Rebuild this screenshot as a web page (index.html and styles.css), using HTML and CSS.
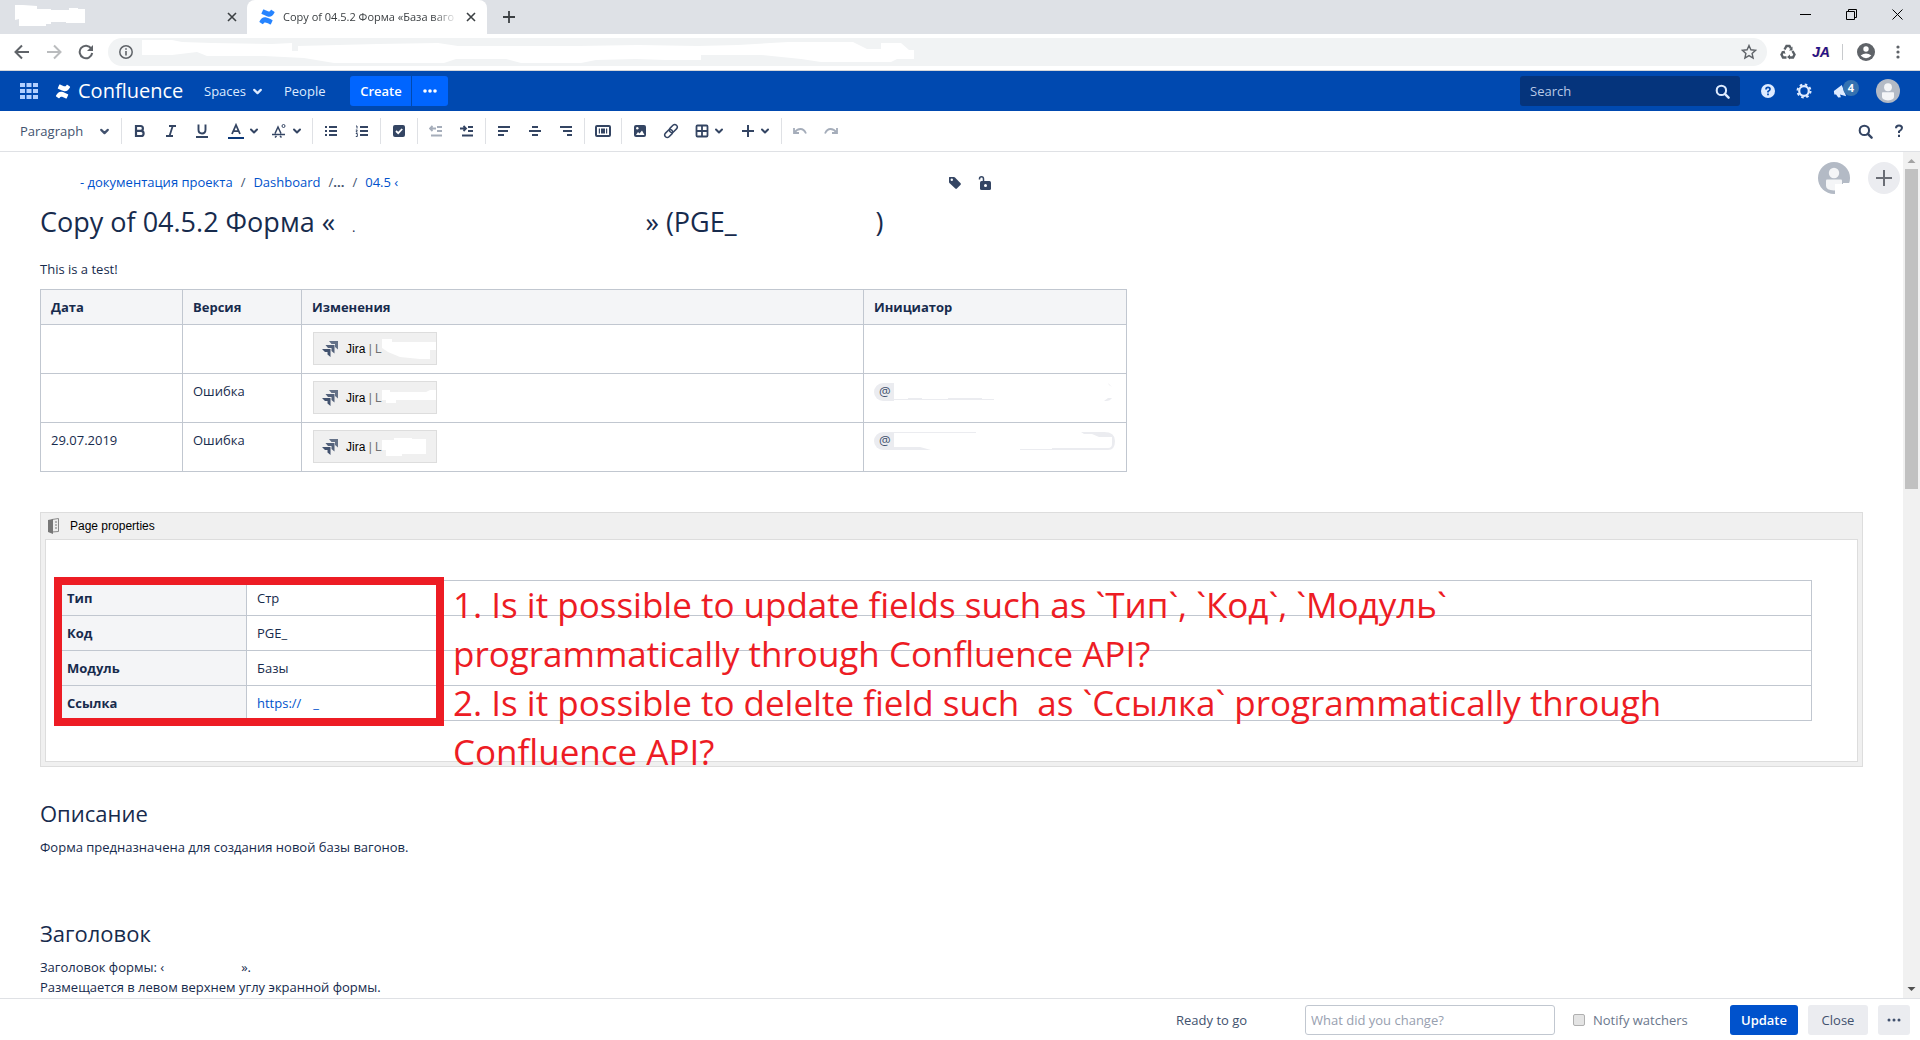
FILE: index.html
```html
<!DOCTYPE html>
<html lang="ru">
<head>
<meta charset="utf-8">
<title>Copy of 04.5.2 Форма</title>
<link rel="stylesheet" href="styles.css">
</head>
<body>
<svg class="defs" aria-hidden="true">
  <symbol id="chev" viewBox="0 0 10 10"><path d="M2 3.500l3 3 3-3" fill="none" stroke="currentColor" stroke-width="2" stroke-linecap="round" stroke-linejoin="round"/></symbol>
  <symbol id="glass" viewBox="0 0 16 16"><circle cx="6.800" cy="6.800" r="5" fill="none" stroke="currentColor" stroke-width="2.200"/><path d="M10.500 10.500l4 4" stroke="currentColor" stroke-width="2.600" stroke-linecap="round"/></symbol>
  <symbol id="conf" viewBox="0 0 16 16"><path d="M.6 12.200c1.600-2.700 3.100-4.200 6-3.900 2 .3 4.200 1.500 6.600 2.600.4.200.5.500.3.900l-1.500 3.300c-.2.400-.5.500-.9.300C6.900 13.400 5.700 12.700 4.300 14.800c-.3.400-.6.500-.9.300L.7 13.300c-.4-.3-.4-.7-.1-1.100z"/><path d="M15.400 3.800c-1.600 2.700-3.100 4.200-6 3.900-2-.3-4.200-1.500-6.600-2.600-.4-.2-.5-.5-.3-.9L4 .900c.2-.4.5-.5.900-.3 4.200 2 5.400 2.700 6.800.6.300-.4.600-.5.900-.3l2.700 1.800c.4.300.4.700.1 1.100z"/></symbol>
  <symbol id="jira" viewBox="0 0 16 16"><path d="M7 0H16v8.500l-3-2.500V3H9.500z" opacity=".8"/><path d="M3.500 4h9v8.500l-3-2.500V7H6z" opacity=".9"/><path d="M0 8h8.500v8l-3-2.500V11H3z"/></symbol>
  <symbol id="person" viewBox="0 0 32 32"><circle cx="16" cy="16" r="16" fill="#b3bac5"/><circle cx="16" cy="11" r="5.200" fill="#f4f5f7"/><path d="M8 18.500q0-1 1-1h14q1 0 1 1V24q0 4-8 4.500Q8 28 8 24z" fill="#f4f5f7"/></symbol>
</svg>

<header class="tabs">
  <div class="tab tab-idle">
    <svg class="blot" width="70" height="27" viewBox="0 0 70 27"><path d="M0 1h8l14 1v3h14v1h18V4h9v1h7v14H51v-1H36v2h-5v2H4v-7L0 16z" fill="#fff"/></svg>
    <button class="tab-x" aria-label="Close tab"><svg width="10" height="10" viewBox="0 0 10 10"><path d="M1 1l8 8M9 1L1 9" stroke="#3c4043" stroke-width="1.600"/></svg></button>
  </div>
  <div class="tab tab-on">
    <svg width="16" height="16" fill="#2684ff"><use href="#conf"/></svg>
    <span class="tab-title">Copy of 04.5.2 Форма «База ваго</span>
    <button class="tab-x" aria-label="Close tab"><svg width="10" height="10" viewBox="0 0 10 10"><path d="M1 1l8 8M9 1L1 9" stroke="#3c4043" stroke-width="1.600"/></svg></button>
  </div>
  <button class="tab-new" aria-label="New tab"><svg width="12" height="12" viewBox="0 0 12 12"><path d="M6 0v12M0 6h12" stroke="#3c4043" stroke-width="1.800"/></svg></button>
  <div class="window-buttons">
    <button aria-label="Minimize"><svg width="11" height="11"><path d="M0 5.500h11" stroke="#000"/></svg></button>
    <button aria-label="Restore"><svg width="11" height="11" fill="none" stroke="#000"><path d="M.5 2.500h8v8h-8zM2.500 2.500v-2h8v8h-2"/></svg></button>
    <button aria-label="Close window"><svg width="11" height="11"><path d="M.5.500l10 10M10.500.500l-10 10" stroke="#000"/></svg></button>
  </div>
</header>

<nav class="address" aria-label="Browser">
  <button class="nav-btn" aria-label="Back"><svg width="16" height="16" viewBox="0 0 16 16" fill="none" stroke="#5f6368" stroke-width="2"><path d="M15 8H2M8 1.500L1.500 8 8 14.500"/></svg></button>
  <button class="nav-btn" aria-label="Forward"><svg width="16" height="16" viewBox="0 0 16 16" fill="none" stroke="#babcbe" stroke-width="2"><path d="M1 8h13M8 1.500L14.500 8 8 14.500"/></svg></button>
  <button class="nav-btn" aria-label="Reload"><svg width="16" height="16" viewBox="0 0 16 16"><path d="M13.200 4.400A6.300 6.300 0 1 0 14.200 9" fill="none" stroke="#5f6368" stroke-width="2"/><path d="M15 1v6H9z" fill="#5f6368"/></svg></button>
  <div class="omnibox">
    <svg width="14" height="14" viewBox="0 0 14 14"><circle cx="7" cy="7" r="6.200" fill="none" stroke="#5f6368" stroke-width="1.500"/><path d="M7 6v4.500M7 3.200v1.600" stroke="#5f6368" stroke-width="1.600"/></svg>
    <svg class="url-blot" width="772" height="26" viewBox="0 0 772 26"><path d="M0 1h30l10 2 30 1 60 1 20-1v8h6V7l80-2 60-1 20 3h120l60-1 60 1 40-1 50-3h65l14 7h14V4h20l8 7h18v9h-30l-6 3h-70l-20-3-40-4h-60v5h-35l-30-1-40 1-15 3h-60l-15-4h-50l-12 4h-110l-30-5-60-3H165v1h-100l-10-4-25 3H0z" fill="#fff"/></svg>
    <svg class="star" width="16" height="16" viewBox="0 0 16 16"><path d="M8 1.500l1.900 4.300 4.700.5-3.500 3.100 1 4.600L8 11.600 3.900 14l1-4.600L1.400 6.300l4.700-.5z" fill="none" stroke="#5f6368" stroke-width="1.400"/></svg>
  </div>
  <div class="extensions">
    <button aria-label="Recycle"><svg width="16" height="16" viewBox="0 0 16 16" fill="none" stroke="#5a6066" stroke-width="2.400"><path d="M4.500 5.500l2-3.500h3l1.500 2.500M12.500 7l2 3.500-1.500 3H9M6.500 13.500H3l-1.500-3L3.300 7.500"/><path d="M12.500 2.500v4H9zM10 10.500v5l-3-2.500zM1 8l3.500-1.500L5.500 10z" fill="#5a6066" stroke="none"/></svg></button>
    <button class="ja">JA</button>
    <span class="bar"></span>
    <button aria-label="Profile"><svg width="18" height="18" viewBox="0 0 18 18"><circle cx="9" cy="9" r="9" fill="#5f6368"/><circle cx="9" cy="6" r="2.700" fill="#fff"/><path d="M3.600 12.600Q9 8.400 14.400 12.600 9 17.800 3.600 12.600z" fill="#fff"/></svg></button>
    <button aria-label="Menu"><svg width="4" height="16" viewBox="0 0 4 16" fill="#5f6368"><circle cx="2" cy="3" r="1.600"/><circle cx="2" cy="8" r="1.600"/><circle cx="2" cy="13" r="1.600"/></svg></button>
  </div>
</nav>

<header class="app-bar">
  <button class="apps" aria-label="Applications"><svg width="18" height="16" viewBox="0 0 18 16" fill="#b3d0ff"><path d="M0 0h5v4H0zM6.500 0h5v4h-5zM13 0h5v4h-5zM0 6h5v4H0zM6.500 6h5v4h-5zM13 6h5v4h-5zM0 12h5v4H0zM6.500 12h5v4h-5zM13 12h5v4h-5z"/></svg></button>
  <a class="brand" href="#"><svg width="16" height="15" fill="#fff"><use href="#conf"/></svg>Confluence</a>
  <a class="menu-link spaces" href="#">Spaces<svg width="11" height="11"><use href="#chev"/></svg></a>
  <a class="menu-link" href="#">People</a>
  <div class="create"><button class="create-main">Create</button><button class="create-more" aria-label="Create from template"><svg width="14" height="4" fill="#fff"><circle cx="2" cy="2" r="1.800"/><circle cx="7" cy="2" r="1.800"/><circle cx="12" cy="2" r="1.800"/></svg></button></div>
  <label class="search"><input type="text" placeholder="Search" aria-label="Search"><svg width="15" height="15"><use href="#glass"/></svg></label>
  <button class="bar-icon" aria-label="Help"><svg width="14" height="14" viewBox="0 0 14 14"><circle cx="7" cy="7" r="7" fill="#deebff"/><path d="M5 5.400Q5 3.400 7 3.400t2 1.900Q9 6.500 7 7.500v1M7 9.600v1.600" fill="none" stroke="#0049b0" stroke-width="1.700"/></svg></button>
  <button class="bar-icon" aria-label="Settings"><svg width="16" height="16" viewBox="0 0 16 16" fill="none" stroke="#deebff"><circle cx="8" cy="8" r="6.500" stroke-width="2" stroke-dasharray="2.550 2.550"/><circle cx="8" cy="8" r="4.800" stroke-width="2.200"/></svg></button>
  <button class="bar-icon bell" aria-label="Notifications"><svg width="14" height="14" viewBox="0 0 16 16" fill="#deebff"><path d="M1 8l9-7 5 13-7-2 1 3-3 .5L3.500 12 1.500 12z"/></svg><span class="badge">4</span></button>
  <a class="me" href="#" aria-label="Profile"><svg width="24" height="24"><use href="#person"/></svg></a>
</header>

<div class="toolbar" role="toolbar">
  <button class="style-pick">Paragraph<svg width="11" height="11"><use href="#chev"/></svg></button>
  <div class="group">
    <button class="tool" aria-label="Bold"><svg width="16" height="16" viewBox="0 0 16 16" fill="none" stroke="currentColor" stroke-width="2.200"><path d="M4 3h4.500a2.400 2.400 0 0 1 0 4.800H4h5a2.600 2.600 0 0 1 0 5.200H4zV13"/></svg></button>
    <button class="tool" aria-label="Italic"><svg width="16" height="16" viewBox="0 0 16 16" fill="none" stroke="currentColor" stroke-width="1.800"><path d="M6 3h7M3 13h7M9.700 3L6.500 13"/></svg></button>
    <button class="tool" aria-label="Underline"><svg width="16" height="16" viewBox="0 0 16 16" fill="none" stroke="currentColor" stroke-width="1.900"><path d="M4.500 1.500v5.300q0 3.700 3.500 3.700t3.500-3.700V1.500M2 14h12"/></svg></button>
    <button class="tool drop shifted" aria-label="Text colour"><svg width="16" height="16" viewBox="0 0 16 16" fill="none" stroke="currentColor" stroke-width="1.800"><path d="M4 11L8 2l4 9M5.500 8.200h5"/><path d="M0 15h16" stroke="#0c3878" stroke-width="2"/></svg><svg width="10" height="10"><use href="#chev"/></svg></button>
    <button class="tool drop" aria-label="More formatting"><svg width="16" height="16" viewBox="0 0 16 16" fill="none" stroke="currentColor" stroke-width="1.500"><path d="M4 10.500L7 4l3 6.500M1 11.500h13M4 14.500l1.500-1.500M9 13l1.500 1.500"/><circle cx="12.500" cy="3" r="1.500" stroke-width="1"/></svg><svg width="10" height="10"><use href="#chev"/></svg></button>
  </div>
  <div class="group">
    <button class="tool" aria-label="Bullet list"><svg width="14" height="14" viewBox="0 0 14 14" stroke="currentColor" stroke-width="2"><path d="M1 3h2M1 7h2M1 11h2M5 3h8M5 7h8M5 11h8"/></svg></button>
    <button class="tool" aria-label="Numbered list"><svg width="14" height="14" viewBox="0 0 14 14" fill="none" stroke="currentColor" stroke-width="2"><path d="M5 3h8M5 7h8M5 11h8"/><path d="M1 2h1v2.500M.8 6h1.500L1 8h1.500M.8 9.500h1.500v3H.8" stroke-width="1"/></svg></button>
  </div>
  <div class="group">
    <button class="tool" aria-label="Task list"><svg width="14" height="14" viewBox="0 0 14 14"><rect x="1" y="1" width="12" height="12" rx="2" fill="currentColor"/><path d="M4 7l2.200 2.200L10.200 5" fill="none" stroke="#fff" stroke-width="1.800"/></svg></button>
  </div>
  <div class="group">
    <button class="tool off" aria-label="Outdent"><svg width="14" height="14" viewBox="0 0 14 14" fill="none" stroke="currentColor" stroke-width="1.800"><path d="M8 3h5M8 7h5M2 11.500h11M7 4.500H1M3.500 2L1 4.500 3.500 7"/></svg></button>
    <button class="tool" aria-label="Indent"><svg width="14" height="14" viewBox="0 0 14 14" fill="none" stroke="currentColor" stroke-width="1.800"><path d="M8 3h5M8 7h5M2 11.500h11M0 4.500h6M3.500 2L6 4.500 3.500 7"/></svg></button>
  </div>
  <div class="group">
    <button class="tool" aria-label="Align left"><svg width="14" height="14" viewBox="0 0 14 14" stroke="currentColor" stroke-width="2"><path d="M1 3h12M1 7h10M1 11h6"/></svg></button>
    <button class="tool" aria-label="Align centre"><svg width="14" height="14" viewBox="0 0 14 14" stroke="currentColor" stroke-width="2"><path d="M4 3h6M1 7h12M4 11h6"/></svg></button>
    <button class="tool" aria-label="Align right"><svg width="14" height="14" viewBox="0 0 14 14" stroke="currentColor" stroke-width="2"><path d="M1 3h12M4 7h9M8 11h5"/></svg></button>
  </div>
  <div class="group">
    <button class="tool" aria-label="Page layout"><svg width="16" height="14" viewBox="0 0 16 14"><rect x="1" y="2" width="14" height="10" rx="1" fill="none" stroke="currentColor" stroke-width="2"/><path d="M3.800 4.500h1.200v5H3.800zM6 4.500h4v5H6zM11 4.500h1.200v5H11z" fill="currentColor"/></svg></button>
  </div>
  <div class="group">
    <button class="tool" aria-label="Image"><svg width="14" height="14" viewBox="0 0 14 14"><rect x="1" y="1" width="12" height="12" rx="2" fill="currentColor"/><circle cx="4.300" cy="4.300" r="1.200" fill="#fff"/><path d="M3 11l2-3 1.500 1.500L9 6.500l2.500 4.500z" fill="#fff"/></svg></button>
    <button class="tool" aria-label="Link"><svg width="16" height="16" viewBox="0 0 16 16" fill="none" stroke="currentColor" stroke-width="1.500"><rect x="5.800" y="3" width="9" height="5" rx="2.500" transform="rotate(-45 10.300 5.500)"/><rect x="1.200" y="8" width="9" height="5" rx="2.500" transform="rotate(-45 5.700 10.500)"/></svg></button>
    <button class="tool drop" aria-label="Table"><svg width="14" height="14" viewBox="0 0 14 14" fill="none" stroke="currentColor" stroke-width="1.800"><rect x="1.500" y="1.500" width="11" height="11" rx="1"/><path d="M7 1.500v11M1.500 7h11"/></svg><svg width="10" height="10"><use href="#chev"/></svg></button>
    <button class="tool drop" aria-label="Insert"><svg width="14" height="14" viewBox="0 0 14 14" stroke="currentColor" stroke-width="2"><path d="M7 1v12M1 7h12"/></svg><svg width="10" height="10"><use href="#chev"/></svg></button>
  </div>
  <div class="group">
    <button class="tool off" aria-label="Undo"><svg width="14" height="14" viewBox="0 0 14 14" fill="none" stroke="currentColor" stroke-width="1.800"><path d="M1 4v5h5M1.500 8.500Q4 5 7.500 5T13 9.500"/></svg></button>
    <button class="tool off" aria-label="Redo"><svg width="14" height="14" viewBox="0 0 14 14" fill="none" stroke="currentColor" stroke-width="1.800"><path d="M13 4v5H8M12.500 8.500Q10 5 6.500 5T1 9.500"/></svg></button>
  </div>
  <div class="toolbar-end">
    <button class="tool" aria-label="Find"><svg width="15" height="15"><use href="#glass"/></svg></button>
    <button class="tool" aria-label="Editor help"><svg width="12" height="14" viewBox="0 0 12 14"><path d="M3 4.200Q3 1.500 6 1.500t3 2.500Q9 5.500 6 7.500V9M6 10.800V13" fill="none" stroke="currentColor" stroke-width="2"/></svg></button>
  </div>
</div>

<div class="stage">
  <main class="page">
    <div class="top-line">
      <nav class="crumbs" aria-label="Breadcrumbs">
        <a href="#">- документация проекта</a><span>/</span><a href="#">Dashboard</a><span>/<b>...</b></span><span>/</span><a href="#">04.5 ‹</a>
      </nav>
      <div class="page-tools">
        <button aria-label="Labels"><svg width="14" height="14" viewBox="0 0 14 14"><path d="M1 1.500Q1 1 1.500 1H6q.6 0 1 .4l5.600 5.800q.7.800 0 1.600l-3.700 3.800q-.8.700-1.600 0L1.400 7Q1 6.600 1 6z" fill="#344563"/><circle cx="3.800" cy="3.800" r="1.200" fill="#fff"/></svg></button>
        <button aria-label="Restrictions"><svg width="14" height="14" viewBox="0 0 14 14"><path d="M1.500 3.500V2.800Q1.500.800 3.500.800T5.500 3v3" fill="none" stroke="#344563" stroke-width="1.500"/><rect x="2" y="5" width="11" height="9" rx="1.500" fill="#344563"/><circle cx="7.500" cy="9.500" r="1.500" fill="#fff"/></svg></button>
      </div>
      <div class="people">
        <svg width="32" height="32"><use href="#person"/><path d="M17 22h8v-1h7v11H17z" fill="#fff"/></svg>
        <button class="invite" aria-label="Invite"><svg width="16" height="16" viewBox="0 0 16 16"><path d="M8 0v16M0 8h16" stroke="#6b6e76" stroke-width="2"/></svg></button>
      </div>
    </div>

    <h1 class="title"><span>Copy of 04.5.2 Форма «</span><span class="gap-s"></span><small>.</small><span class="gap-l"></span><span>» (PGE_</span><span class="gap-m"></span><span>)</span></h1>

    <p class="lead">This is a test!</p>

    <table class="history">
      <thead><tr><th class="c-date">Дата</th><th class="c-ver">Версия</th><th class="c-chg">Изменения</th><th>Инициатор</th></tr></thead>
      <tbody>
        <tr><td></td><td></td><td><div class="macro"><svg width="16" height="16" fill="#42526e"><use href="#jira"/></svg>Jira <i>| L</i><svg class="smear" width="54" height="20" viewBox="0 0 54 20"><path d="M0 0h10v3h44v8h-6v9H38l-20-2-12-5-6-4z" fill="#fff"/></svg></div></td><td></td></tr>
        <tr><td></td><td>Ошибка</td><td><div class="macro"><svg width="16" height="16" fill="#42526e"><use href="#jira"/></svg>Jira <i>| L</i><svg class="smear" width="54" height="20" viewBox="0 0 54 20"><path d="M0 2h8v2h36l4-2h6v10H14v3H4v-3H0z" fill="#fff"/></svg></div></td>
          <td><div class="mention"><span>@</span><svg width="218" height="18" viewBox="0 0 218 18" fill="#ebecf0"><path d="M0 17h100v-1H88v-1H54v1H28v-1H14v1H0zM210 18l4-3h4q-2 3-6 3zM214 0l4 4-3-2z"/></svg></div></td></tr>
        <tr><td>29.07.2019</td><td>Ошибка</td><td><div class="macro"><svg width="16" height="16" fill="#42526e"><use href="#jira"/></svg>Jira <i>| L</i><svg class="smear" width="54" height="20" viewBox="0 0 54 20"><path d="M0 3h12V1h18v1h14v15H20v2H4v-6H0z" fill="#fff"/></svg></div></td>
          <td><div class="mention"><span>@</span><svg width="221" height="18" viewBox="0 0 221 18" fill="#ebecf0"><path d="M0 0h82v1H0zM0 15h26l11 3H0zM126 17h32v-1h56q4 0 4-4V5h-13l-7-3h-8l-3-2h23q11 0 11 9t-7 9h-88z"/></svg></div></td></tr>
      </tbody>
    </table>

    <section class="macro-box">
      <div class="macro-head"><svg width="12" height="16" viewBox="0 0 12 16"><path d="M4 1.500l6.500-1v13l-6.500.5z" fill="#eee" stroke="#8a8a8a"/><path d="M0 2l5-1v15l-5-2z" fill="#777"/><path d="M7 4h2M7 7h2M7 10h2" stroke="#777"/></svg>Page properties</div>
      <div class="macro-body">
        <table class="props">
          <tr><th>Тип</th><td>Стр</td></tr>
          <tr><th>Код</th><td>PGE_</td></tr>
          <tr><th>Модуль</th><td>Базы</td></tr>
          <tr><th>Ссылка</th><td><a href="#">https://<span class="gap-link"></span>_</a></td></tr>
        </table>
        <div class="marker"></div>
        <div class="note">
          <p>1. Is it possible to update fields such as `Тип`, `Код`, `Модуль`<br>programmatically through Confluence API?</p>
          <p>2. Is it possible to delelte field such&nbsp; as `Ссылка` programmatically through<br>Confluence API?</p>
        </div>
      </div>
    </section>

    <h2>Описание</h2>
    <p>Форма предназначена для создания новой базы вагонов.</p>
    <h2 class="next">Заголовок</h2>
    <p>Заголовок формы: ‹<span class="gap-p"></span>».<br>Размещается в левом верхнем углу экранной формы.</p>
  </main>
  <div class="scrollbar" aria-hidden="true">
    <svg width="17" height="17"><path d="M4.500 11h8l-4-4z" fill="#a3a3a3"/></svg>
    <div class="thumb"></div>
    <svg width="17" height="17"><path d="M4.500 6h8l-4 4z" fill="#505050"/></svg>
  </div>
</div>

<footer class="save-bar">
  <span class="status">Ready to go</span>
  <input class="comment" type="text" placeholder="What did you change?" aria-label="What did you change?">
  <label class="notify"><input type="checkbox">Notify watchers</label>
  <button class="btn primary">Update</button>
  <button class="btn">Close</button>
  <button class="btn more" aria-label="More"><svg width="14" height="4" fill="#42526e"><circle cx="2" cy="2" r="1.500"/><circle cx="7" cy="2" r="1.500"/><circle cx="12" cy="2" r="1.500"/></svg></button>
</footer>
</body>
</html>
```
FILE: styles.css
```css
* { box-sizing: border-box; }
body {
  margin: 0;
  height: 100vh;
  display: flex;
  flex-direction: column;
  overflow: hidden;
  font: 13px/20px "Open Sans", "Noto Sans", sans-serif;
  color: #172b4d;
  background: #fff;
}
button, input { font: inherit; color: inherit; }
button { border: 0; padding: 0; background: none; display: flex; align-items: center; justify-content: center; }
a { color: #0052cc; text-decoration: none; }
svg { flex: none; display: block; }
.defs { position: absolute; width: 0; height: 0; }

/* Browser tabs */
.tabs { flex: none; display: flex; height: 34px; background: #dee1e6; }
.tab { display: flex; align-items: center; }
.tab-idle { width: 247px; justify-content: space-between; padding: 0 10px 0 15px; }
.tab-on { width: 240px; padding: 0 11px 0 12px; background: #fff; border-radius: 8px 8px 0 0; gap: 8px; font-size: 11px; color: #3c4043; }
.tab-title { flex: 1; overflow: hidden; white-space: nowrap; mask-image: linear-gradient(90deg, #000 85%, transparent); }
.tab-new { width: 44px; }
.window-buttons { margin-left: auto; display: flex; height: 28px; }
.window-buttons button { width: 46px; }

/* Address bar */
.address { flex: none; display: flex; align-items: center; height: 37px; padding: 0 16px 0 6px; border-bottom: 1px solid #d4d6da; }
.nav-btn { width: 32px; }
.omnibox { flex: 1; display: flex; align-items: center; gap: 9px; height: 28px; margin-left: 6px; padding: 0 10px 0 11px; border-radius: 14px; background: #f1f3f4; }
.star { margin-left: auto; }
.extensions { display: flex; align-items: center; gap: 14px; padding: 0 4px 0 13px; }
.ja { width: 22px; margin-right: -4px; font: italic bold 14px/16px "Liberation Sans", sans-serif; color: #22118f; text-shadow: 1px 0 #ffd9a0; }
.bar { width: 1px; height: 16px; background: #c8cacd; }
.extensions > :last-child { margin-left: 7px; }

/* Application header */
.app-bar { flex: none; display: flex; align-items: center; height: 40px; padding: 0 20px; background: #0049b0; color: #deebff; }
.apps { width: 18px; margin-right: 17px; }
.brand { display: flex; align-items: center; gap: 7px; width: 149px; color: #fff; font-size: 20px; }
.menu-link { color: #deebff; }
.spaces { display: flex; align-items: center; gap: 6px; width: 80px; }
.create { display: flex; gap: 1px; margin-left: 25px; height: 30px; font-weight: 600; color: #fff; }
.create button { background: #0065ff; }
.create-main { width: 61px; border-radius: 3px 0 0 3px; }
.create-more { width: 36px; border-radius: 0 3px 3px 0; }
.search { display: flex; align-items: center; width: 220px; height: 30px; margin-left: auto; margin-right: 10px; padding: 0 10px; border-radius: 3px; background: #05347c; }
.search input { flex: 1; min-width: 0; padding: 0; border: 0; background: none; }
.search input::placeholder { color: #b8c9e6; opacity: 1; }
.bar-icon { width: 36px; position: relative; }
.badge { position: absolute; left: 21px; top: -4px; width: 16px; height: 16px; border-radius: 8px; background: #3572b0; color: #fff; font: bold 11px/16px "Open Sans", sans-serif; text-align: center; }
.me { margin-left: 18px; }

/* Editor toolbar */
.toolbar { flex: none; display: flex; align-items: center; height: 41px; padding: 0 6px 0 20px; border-bottom: 1px solid #dfe1e5; color: #344563; }
.style-pick { width: 101px; justify-content: space-between; padding-right: 11px; color: #42526e; }
.group { display: flex; height: 26px; padding: 0 3px 0 2px; border-left: 1px solid #dfe1e5; }
.tool { width: 31px; }
.drop { width: 46px; gap: 5px; }
.shifted { padding-left: 6px; }
.off { color: #a5adba; }
.toolbar-end { margin-left: auto; display: flex; gap: 2px; }

/* Page */
.stage { flex: 1; min-height: 0; display: flex; }
.page { flex: 1; min-width: 0; overflow: hidden; padding: 5px 40px 0; }
p { margin: 0; }
.top-line { display: flex; align-items: center; height: 42px; margin-right: -37px; }
.crumbs { display: flex; gap: 8px; width: calc(49% - 3px); padding: 8px 0 0 40px; }
.crumbs span { color: #42526e; }
.page-tools { display: flex; gap: 16px; padding-top: 10px; }
.people { display: flex; gap: 18px; margin-left: auto; }
.invite { width: 32px; height: 32px; border-radius: 16px; background: #ebecf0; }
.title { display: flex; align-items: baseline; margin: 7px 0 0; font-size: 27px; line-height: 32px; font-weight: 400; white-space: pre; }
.title small { font-size: 13px; }
.gap-s { width: 17px; }
.gap-l { width: 290px; }
.gap-m { width: 139px; }
.lead { margin-top: 16px; }
table { border-collapse: collapse; table-layout: fixed; }
th, td { border: 1px solid #c1c7d0; padding: 7px 10px; text-align: left; vertical-align: top; }
th { background: #f4f5f7; font-weight: 700; }
.history { width: 1087px; max-width: 100%; margin-top: 10px; }
.history td { height: 49px; }
.c-date { width: 142px; }
.c-ver { width: 119px; }
.c-chg { width: 562px; }
.macro { display: flex; align-items: center; width: 124px; height: 33px; margin-left: 1px; padding-left: 8px; border: 1px solid #ddd; background: #f0f0f0; color: #000; font: 12px/16px "Liberation Sans", sans-serif; white-space: pre; }
.macro > :first-child { margin-right: 8px; }
.macro i { font-style: normal; color: #707070; }
.mention { display: flex; height: 18px; margin-top: 2px; }
.mention span { width: 20px; padding-left: 5px; line-height: 17px; border-radius: 9px 0 0 9px; background: #ebecf0; color: #42526e; }
.macro-box { margin-top: 40px; padding: 0 4px 4px; border: 1px solid #ddd; background: #f0f0f0; }
.macro-head { display: flex; align-items: center; gap: 10px; height: 26px; padding-left: 3px; color: #000; font: 12px/16px "Liberation Sans", sans-serif; }
.macro-body { position: relative; padding: 40px 45px 40px 10px; border: 1px solid #ddd; background: #fff; }
.props { width: 100%; }
.props th { width: 190px; }
.gap-link { display: inline-block; width: 12px; }
.gap-p { display: inline-block; width: 77px; }
.marker { position: absolute; left: 8px; top: 37px; width: 390px; height: 149px; border: 8px solid #ed1c24; }
.note { position: absolute; left: 407px; top: 40px; color: #ed1c24; font-size: 35px; line-height: 49px; white-space: nowrap; }
h2 { margin: 31px 0 9px; font-size: 22px; line-height: 30px; font-weight: 400; }
.next { margin-top: 61px; }
.scrollbar { flex: none; width: 17px; display: flex; flex-direction: column; background: #f1f1f1; }
.thumb { height: 320px; margin: 0 2px auto; background: #c1c1c1; }

/* Save bar */
.save-bar { flex: none; display: flex; align-items: center; justify-content: flex-end; height: 42px; padding: 0 10px; border-top: 1px solid #dfe1e5; color: #42526e; }
.status { width: 129px; }
.comment { width: 250px; height: 30px; padding: 0 5px; border: 1px solid #c1c7d0; border-radius: 3px; background: #fff; }
.comment::placeholder { color: #97a0af; opacity: 1; }
.notify { display: flex; align-items: center; gap: 8px; width: 157px; margin-left: 18px; color: #6b778c; }
.notify input { appearance: none; width: 12px; height: 12px; margin: 0; border: 1px solid #b0b0b0; border-radius: 2px; background: #e4e4e4; }
.btn { height: 30px; width: 60px; margin-left: 10px; border-radius: 3px; background: #ebecf0; color: #42526e; }
.primary { width: 68px; margin-left: 0; background: #0052cc; color: #fff; font-weight: 600; }
.more { width: 32px; }
```
